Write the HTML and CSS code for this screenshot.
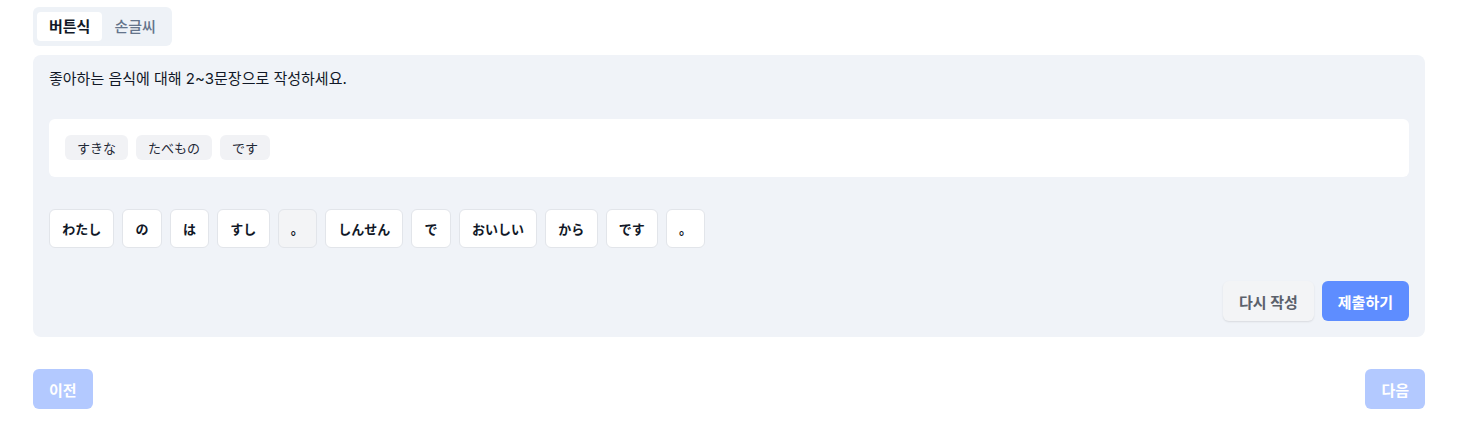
FILE: index.html
```html
<!DOCTYPE html>
<html lang="ko">
<head>
<meta charset="utf-8">
<link rel="stylesheet" href="styles.css">
</head>
<body>
<div class="page">
  <div class="tabs">
    <button class="tab active">버튼식</button>
    <button class="tab">손글씨</button>
  </div>
  <section class="panel">
    <p class="prompt">좋아하는 음식에 대해 2~3문장으로 작성하세요.</p>
    <div class="answer">
      <span class="chip" lang="ja">すきな</span>
      <span class="chip" lang="ja">たべもの</span>
      <span class="chip" lang="ja">です</span>
    </div>
    <div class="words" lang="ja">
      <button class="word">わたし</button>
      <button class="word">の</button>
      <button class="word">は</button>
      <button class="word">すし</button>
      <button class="word used">。</button>
      <button class="word">しんせん</button>
      <button class="word">で</button>
      <button class="word">おいしい</button>
      <button class="word">から</button>
      <button class="word">です</button>
      <button class="word">。</button>
    </div>
    <div class="actions">
      <button class="btn ghost">다시 작성</button>
      <button class="btn primary">제출하기</button>
    </div>
  </section>
  <nav class="nav">
    <button class="btn faded">이전</button>
    <button class="btn faded">다음</button>
  </nav>
</div>
</body>
</html>
```
FILE: styles.css
```css
* { box-sizing: border-box; }
body {
  margin: 0;
  background: #ffffff;
  font-family: Inter, "Noto Sans CJK KR", "Noto Sans CJK JP", sans-serif;
  color: #111827;
}
.chip, .word { font-family: Inter, "Noto Sans CJK JP", "Noto Sans CJK KR", sans-serif; }
button { font-family: inherit; cursor: pointer; }
.page {
  padding: 7px 40px 0 33px;
}
.tabs {
  display: inline-flex;
  padding: 5px 4px;
  background: #eef2f7;
  border-radius: 6px;
}
.tab {
  border: none;
  background: transparent;
  font-size: 15px;
  font-weight: 500;
  color: #64748b;
  padding: 5px 12px;
  line-height: 19px;
  border-radius: 4px;
}
.tab.active {
  background: #ffffff;
  color: #111827;
  font-weight: 700;
}
.panel {
  margin-top: 9px;
  background: #f0f3f8;
  border-radius: 8px;
  padding: 14px 16px 16px;
}
.prompt {
  margin: 0;
  font-size: 15px;
  line-height: 20px;
  color: #111827;
}
.answer {
  margin-top: 30px;
  background: #ffffff;
  border-radius: 6px;
  padding: 16px;
  display: flex;
  gap: 8px;
  min-height: 58px;
}
.chip {
  display: inline-flex;
  align-items: center;
  height: 25px;
  padding: 0 12px;
  background: #f1f2f5;
  border-radius: 6px;
  font-size: 13px;
  color: #1f2937;
}
.words {
  margin-top: 32px;
  display: flex;
  flex-wrap: wrap;
  gap: 8px;
}
.word {
  height: 39px;
  padding: 0 12.2px;
  border: 1px solid #e2e5ea;
  background: #ffffff;
  border-radius: 6px;
  font-size: 13px;
  font-weight: 700;
  color: #111827;
}
.word.used {
  background: #f3f4f6;
}
.actions {
  margin-top: 33px;
  display: flex;
  justify-content: flex-end;
  gap: 8px;
}
.btn {
  height: 40px;
  padding: 0 16px;
  border: none;
  border-radius: 6px;
  font-size: 15px;
  font-weight: 700;
}
.btn.ghost {
  background: #f3f4f6;
  color: #5b616b;
  box-shadow: 0 1px 2px rgba(0,0,0,0.1);
}
.btn.primary {
  background: #5e8dff;
  color: #ffffff;
}
.nav {
  margin-top: 32px;
  display: flex;
  justify-content: space-between;
}
.btn.faded {
  background: #b3c9ff;
  color: #ffffff;
}
```
